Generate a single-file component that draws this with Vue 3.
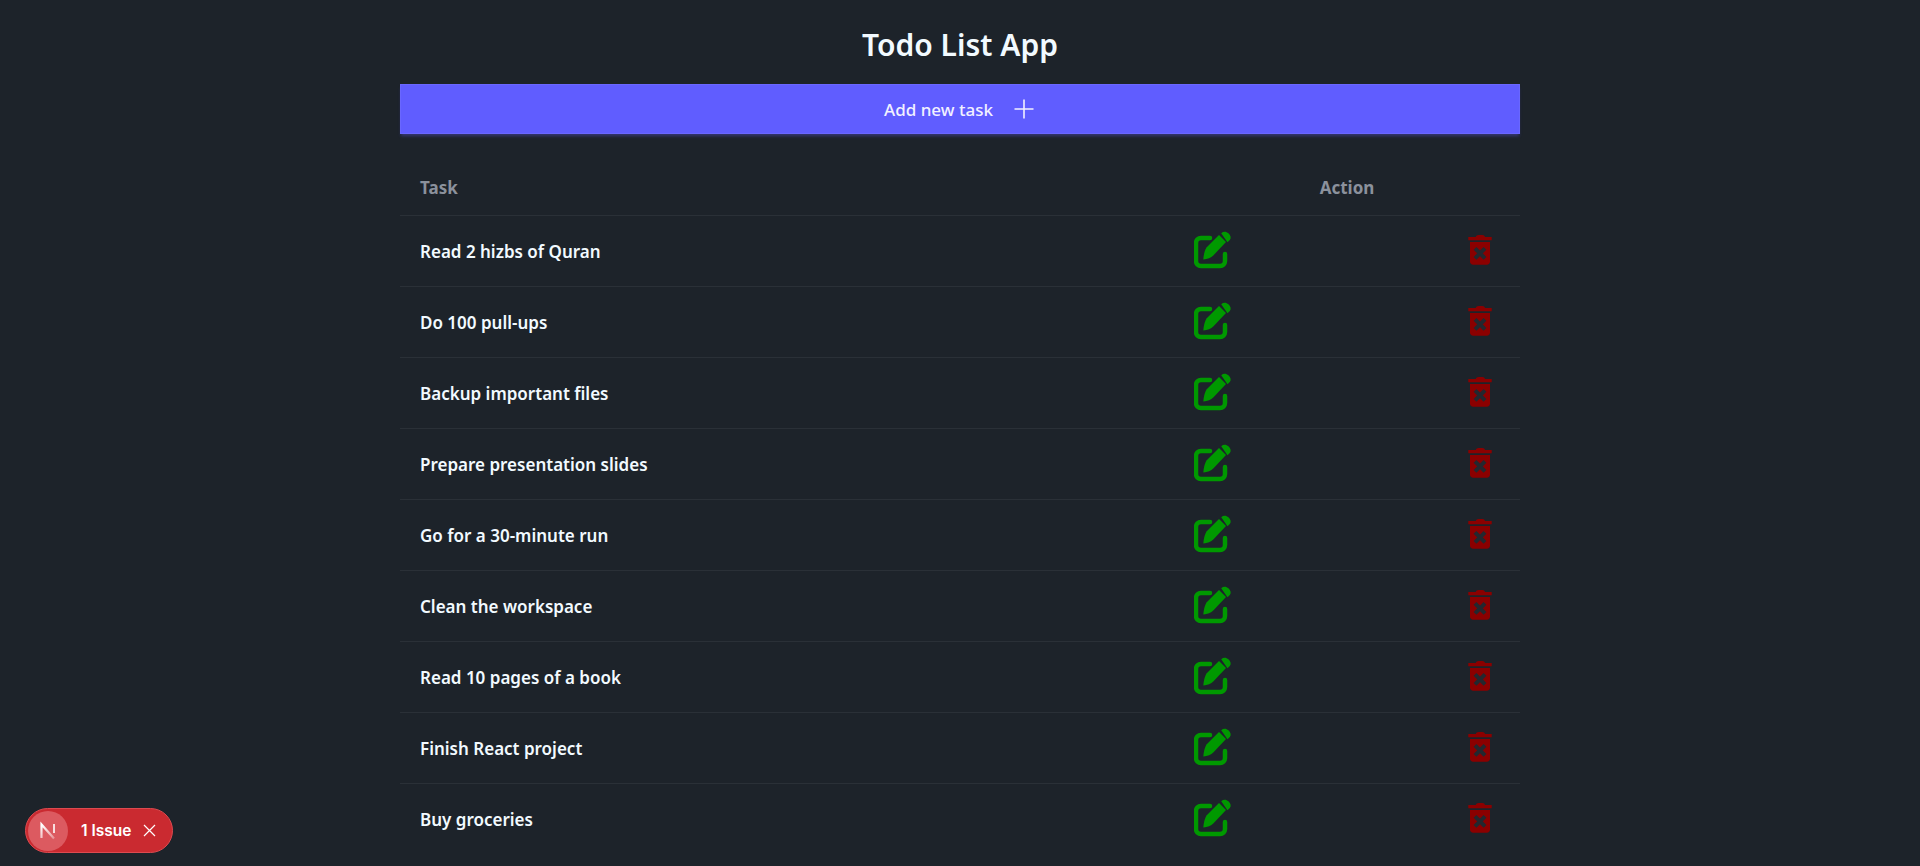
<template>
  <div class="page">
    <h1 class="title">Todo List App</h1>
    <button class="add-btn">
      <span>Add new task</span>
      <svg class="plus" width="24" height="24" viewBox="0 0 24 24" fill="none" stroke="currentColor" stroke-width="1.6">
        <path d="M12 2.500v19M2.500 12h19" />
      </svg>
    </button>

    <table class="tasks">
      <colgroup>
        <col />
        <col class="col-edit" />
        <col class="col-del" />
      </colgroup>
      <thead>
        <tr>
          <th class="th-task">Task</th>
          <th colspan="2" class="th-action">Action</th>
        </tr>
      </thead>
      <tbody>
        <tr v-for="task in tasks" :key="task">
          <td class="task-name">{{ task }}</td>
          <td class="td-edit">
            <svg class="icon" width="40" height="40" viewBox="0 1 40 40">
              <path d="M16 8H7a5 5 0 0 0-5 5v18a5 5 0 0 0 5 5h19a5 5 0 0 0 5-5v-7" fill="none" stroke="#009900" stroke-width="4.500" stroke-linecap="round" />
              <path d="M9.300 29.500c.3-4.500 1.400-9 3.200-12L25 5l7 7-12.500 13.300c-2.500 2.500-6 3.800-10.200 4.200z" fill="#009900" />
              <path d="M27.200 3.200c2.200-2 5-2 7.200.1 2.500 2.300 3 5 1.400 6.800l-2.300 2.200z" fill="#009900" />
            </svg>
          </td>
          <td class="td-del">
            <svg class="icon" width="40" height="40" viewBox="0 1 40 40">
              <path d="M15.700 7c.3-1.300 1.500-2 3-2h3.600c1.500 0 2.500.7 2.700 2h6.700v3.200H8.300V7z" fill="#8b0000" />
              <path d="M10 12h20v19.500c0 1.900-1.300 3.200-3.200 3.200H13.200c-1.900 0-3.200-1.300-3.200-3.200z" fill="#8b0000" />
              <path d="M15 18.300l10 10M25 18.300l-10 10" stroke="#23282f" stroke-width="4" fill="none" />
            </svg>
          </td>
        </tr>
      </tbody>
    </table>
  </div>

  <div class="issue-badge">
    <span class="next-logo">
      <svg width="20" height="20" viewBox="0 0 20 20" fill="none">
        <defs>
          <linearGradient id="fade" x1="6" y1="3" x2="16" y2="17" gradientUnits="userSpaceOnUse">
            <stop offset="0" stop-color="#fff" />
            <stop offset="1" stop-color="#fff" stop-opacity="0.35" />
          </linearGradient>
        </defs>
        <path d="M3.500 17V3.500L16 17.500" stroke="url(#fade)" stroke-width="2.200" />
        <path d="M16 3v9" stroke="#fff" stroke-opacity="0.8" stroke-width="2" />
      </svg>
    </span>
    <span class="issue-text">1 Issue</span>
    <svg class="issue-close" width="13" height="13" viewBox="0 0 13 13" fill="none" stroke="#fff" stroke-width="1.200">
      <path d="M1 1l11 11M12 1L1 12" />
    </svg>
  </div>
</template>

<script setup>
const tasks = [
  'Read 2 hizbs of Quran',
  'Do 100 pull-ups',
  'Backup important files',
  'Prepare presentation slides',
  'Go for a 30-minute run',
  'Clean the workspace',
  'Read 10 pages of a book',
  'Finish React project',
  'Buy groceries'
]
</script>

<style>
html, body {
  margin: 0;
  background: #1d232a;
}
</style>

<style scoped>
.page {
  width: 1120px;
  margin: 0 auto;
  font-family: "Noto Sans", "Open Sans", sans-serif;
  color: #f2faff;
}

.title {
  margin: 0;
  padding-top: 25px;
  height: 84px;
  box-sizing: border-box;
  text-align: center;
  font-size: 30px;
  line-height: 40px;
  font-weight: 600;
}

.add-btn {
  display: flex;
  align-items: center;
  justify-content: center;
  gap: 19px;
  width: 100%;
  height: 50px;
  margin: 0;
  padding: 0;
  border: 1px solid #6a67ff;
  background: #605dff;
  color: #f2f1ff;
  font-family: inherit;
  font-size: 17px;
  font-weight: 500;
  box-shadow: 0 3px 3px -1px rgba(96, 93, 255, 0.35);
}

.plus {
  display: block;
}

.tasks {
  width: 100%;
  margin-top: 25px;
  border-collapse: collapse;
  table-layout: fixed;
}

.col-edit {
  width: 266px;
}

.col-del {
  width: 80px;
}

.tasks th {
  height: 56px;
  padding: 0 20px;
  font-size: 17px;
  font-weight: 700;
  color: #8b919c;
  border-bottom: 1px solid #2a3037;
}

.th-task {
  text-align: left;
}

.th-action {
  text-align: center;
}

.tasks td {
  height: 71px;
  box-sizing: border-box;
  padding: 0 20px;
  border-bottom: 1px solid #2a3037;
}

.tasks tbody tr:last-child td {
  border-bottom: 0;
}

.task-name {
  font-size: 17px;
  font-weight: 600;
}

.icon {
  display: block;
}

.td-del {
  padding: 0 !important;
}

.td-del .icon {
  margin-left: 20px;
}

.issue-badge {
  position: fixed;
  left: 25px;
  top: 808px;
  box-sizing: border-box;
  display: flex;
  align-items: center;
  width: 148px;
  height: 45px;
  padding-left: 2px;
  border: 1px solid #dc4a50;
  border-radius: 23px;
  background: #ca2a30;
  font-family: Inter, sans-serif;
}

.next-logo {
  display: flex;
  align-items: center;
  justify-content: center;
  width: 40px;
  height: 40px;
  border-radius: 50%;
  background: #dc5a60;
}

.issue-text {
  margin-left: 13px;
  font-size: 15.500px;
  font-weight: 600;
  letter-spacing: 0;
  color: #fff;
  white-space: nowrap;
}

.issue-close {
  margin-left: 12px;
}
</style>
